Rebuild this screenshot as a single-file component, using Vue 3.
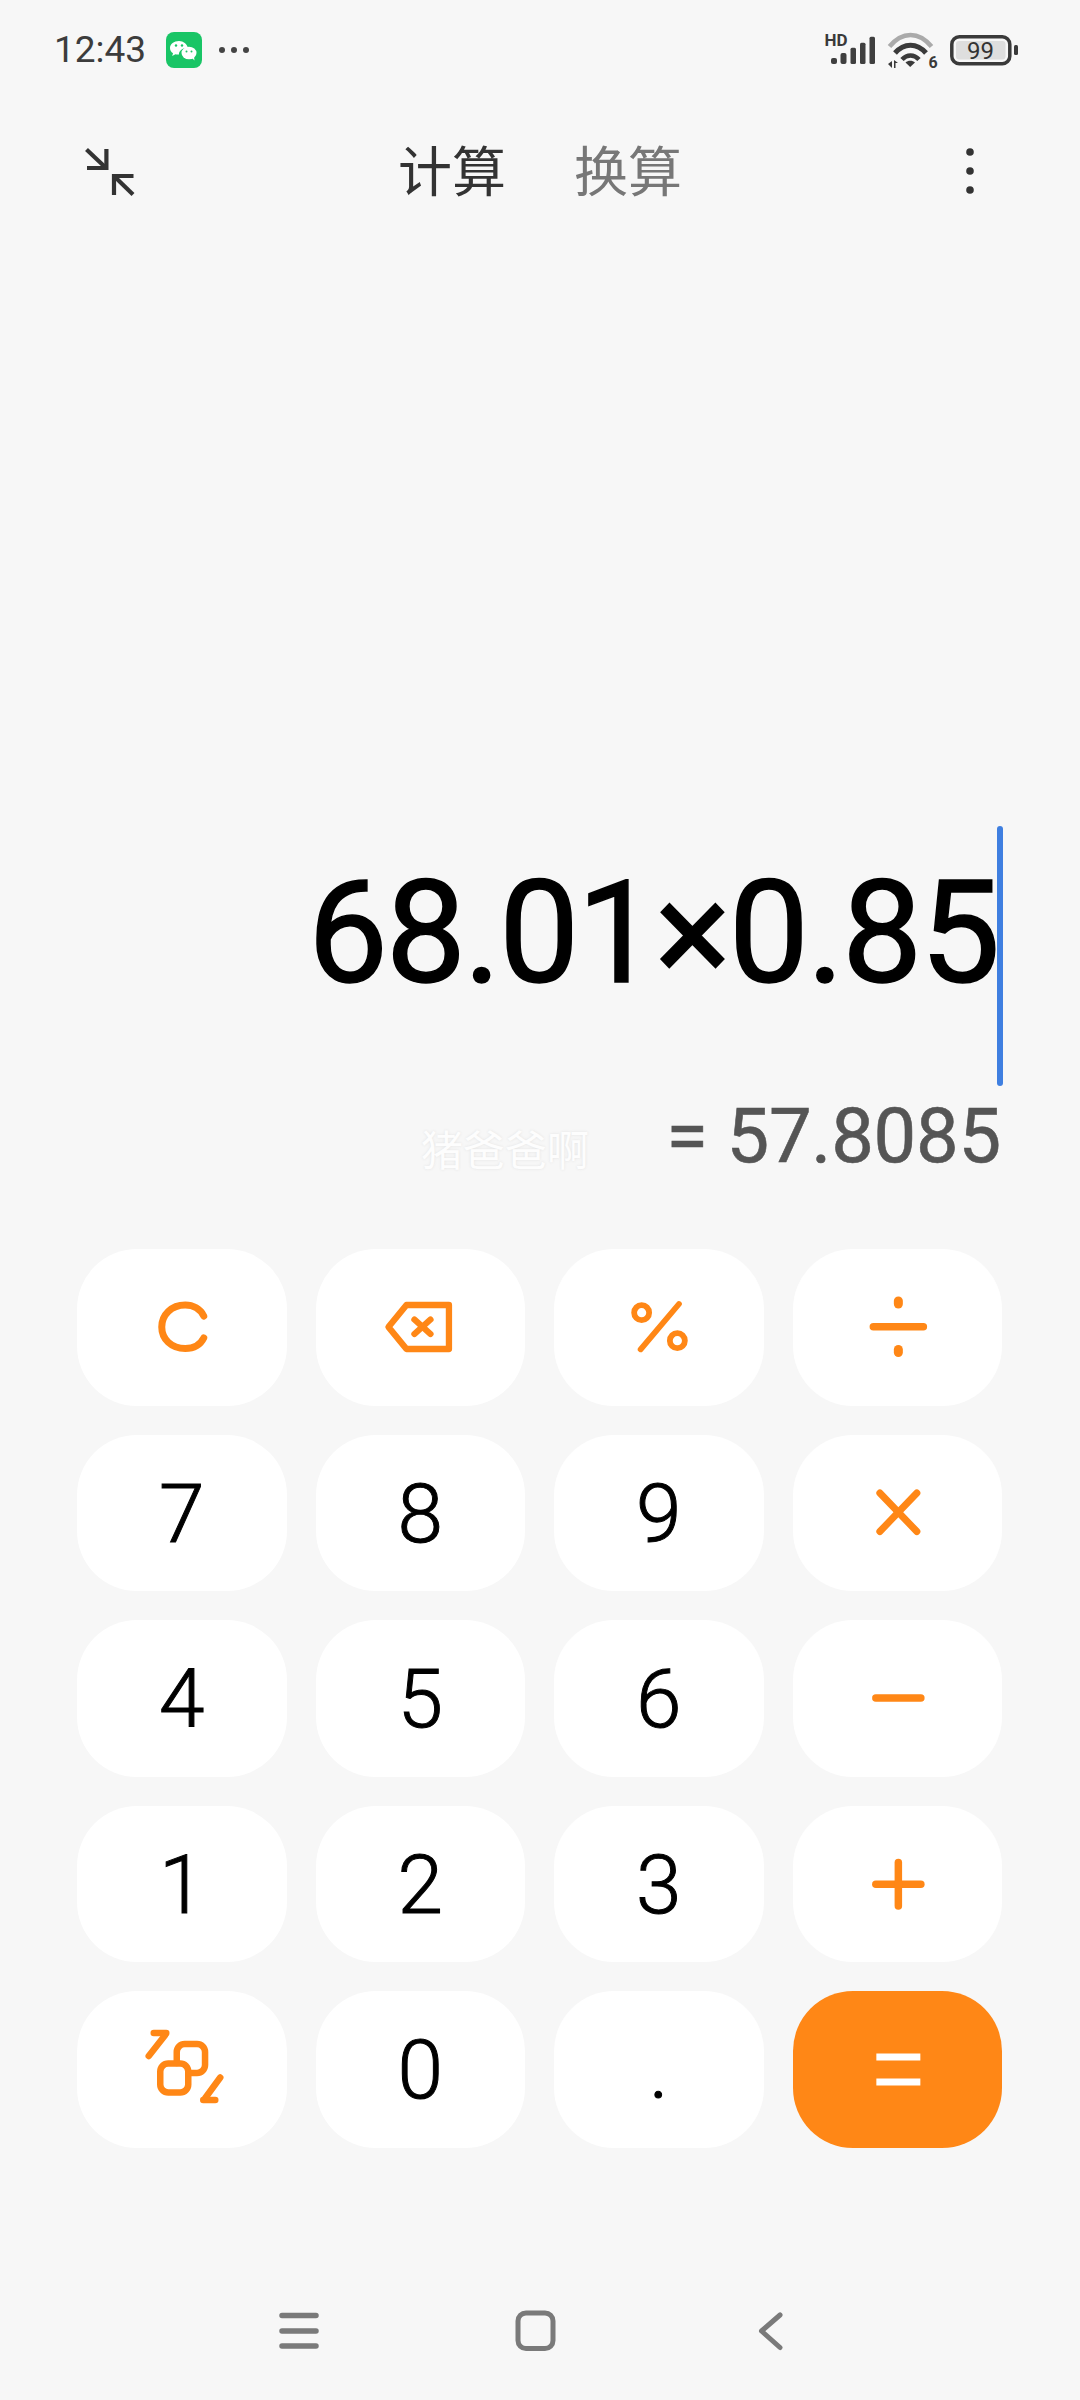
<script setup>
const ICONS = {
  c: { stroke: 7, paths: ['M203.5 1316C200 1309 193 1305 185 1305C171 1305 161.500 1315 161.500 1327C161.500 1339 171 1348.500 185 1348.500C193 1348.500 200 1345 203.500 1338'] },
  back: { stroke: 6.3, paths: ['M388.500 1327L406.500 1305H449V1349H406.500Z', 'M414.500 1319.500L430.500 1334', 'M430.500 1319.500L414.500 1334'] },
  pct: { stroke: 5.8, paths: ['M678.300 1304L640 1349.300', 'M648.500 1312.700a7.500 7.500 0 1 1-15 0a7.500 7.500 0 1 1 15 0Z', 'M684.200 1340.700a7.500 7.500 0 1 1-15 0a7.500 7.500 0 1 1 15 0Z'] },
  div: { stroke: 7.5, paths: ['M873 1326.700H923', 'M898 1301V1304', 'M898 1349.500V1352.500'], width: 9 },
  mul: { stroke: 7, paths: ['M879.500 1492.500L916.500 1531', 'M916.500 1492.500L879.500 1531'] },
  sub: { stroke: 7.5, paths: ['M875.500 1698H920.500'] },
  add: { stroke: 7.5, paths: ['M875.500 1883.800H920.500', 'M898 1862V1905.500'] },
  swap: { stroke: 6.5, paths: ['M168 2063.500h12a8 8 0 0 1 8 8v13a8 8 0 0 1-8 8h-12a8 8 0 0 1-8-8v-13a8 8 0 0 1 8-8Z', 'M176.500 2063V2052a8 8 0 0 1 8-8h12.300a8 8 0 0 1 8 8v13a8 8 0 0 1-8 8H188', 'M148.500 2056L165 2035', 'M153.500 2033H166', 'M220 2077.500L205 2098', 'M203 2100H215'] },
  eq: { stroke: 7, light: true, butt: true, paths: ['M876 2057H920', 'M876 2082H920'] },
}

const rows = [
  [{ icon: 'c', label: 'C' }, { icon: 'back' }, { icon: 'pct' }, { icon: 'div' }],
  [{ t: '7' }, { t: '8' }, { t: '9' }, { icon: 'mul' }],
  [{ t: '4' }, { t: '5' }, { t: '6' }, { icon: 'sub' }],
  [{ t: '1' }, { t: '2' }, { t: '3' }, { icon: 'add' }],
  [{ icon: 'swap' }, { t: '0' }, { t: '.' }, { icon: 'eq', primary: true }],
]

const keys = rows.flatMap((row, r) =>
  row.map((k, c) => {
    const cx = 181.75 + 238.3 * c
    const cy = 1327 + 185.5 * r
    return { ...k, id: `${r}-${c}`, vb: `${cx - 60} ${cy - 60} 120 120`, def: k.icon ? ICONS[k.icon] : null }
  })
)
</script>

<template>
  <div class="page">
    <div class="status">
      <span class="time">12:43</span>
      <svg class="wechat" viewBox="166 32 36 36" width="36" height="36">
        <rect x="166" y="32" width="36" height="36" rx="8" fill="#19c566" />
        <path d="M179 41c-5 0-9 3-9 7c0 2.200 1 4 3 5.200l-.8 2.800l3.200-1.800c1.100.3 2.400.4 3.600.3c-.4-3 3-7 9-6.500C187 44 183.500 41 179 41Z" fill="#fff" />
        <ellipse cx="189" cy="53" rx="7.500" ry="6.300" fill="#fff" />
        <path d="M192 58l2.500 2.500l-.5-3.500Z" fill="#fff" />
        <circle cx="176" cy="45.500" r="1.200" fill="#19c566" />
        <circle cx="182" cy="45.500" r="1.200" fill="#19c566" />
        <circle cx="186.500" cy="51.500" r="1" fill="#19c566" />
        <circle cx="191.500" cy="51.500" r="1" fill="#19c566" />
      </svg>
      <svg class="more" viewBox="218 44 32 12" width="32" height="12">
        <circle cx="222" cy="50" r="3" fill="#444" />
        <circle cx="234" cy="50" r="3" fill="#444" />
        <circle cx="246" cy="50" r="3" fill="#444" />
      </svg>
      <svg class="signal" viewBox="824 30 196 42" width="196" height="42">
        <text x="824.500" y="46" class="hd">HD</text>
        <g fill="#3f3f3f">
          <rect x="831" y="58" width="6" height="6" rx="2" />
          <rect x="840.500" y="53" width="6" height="11" rx="2" />
          <rect x="850.500" y="47.700" width="5.500" height="16.300" rx="1.500" />
          <rect x="860" y="42.700" width="5.500" height="21.300" rx="1.500" />
          <rect x="869.500" y="36.700" width="5.500" height="27.300" rx="1.500" />
        </g>
        <g fill="none" stroke-linecap="butt">
          <path d="M889.500 46.500C902 31 919 31 931.500 46.500" stroke="#aaa" stroke-width="4.500" />
          <path d="M895 53C904 42.500 917 42.500 926 53" stroke="#3a3a3a" stroke-width="5" />
          <path d="M902 59.500C907 54 914 54 919 59.500" stroke="#3a3a3a" stroke-width="4.500" />
        </g>
        <path d="M905.500 62.500C908 60 912.500 60 915 62.500L910.200 67Z" fill="#3a3a3a" />
        <path d="M888 64l4-3v7ZM894 60l4 3h-2.500v5h-1.500Z" fill="#3a3a3a" />
        <text x="928.500" y="68" class="six">6</text>
        <rect x="951.800" y="36.800" width="58" height="27" rx="7.500" fill="none" stroke="#3a3a3a" stroke-width="3.500" />
        <rect x="956" y="41" width="49.500" height="18.500" rx="3" fill="#dedede" />
        <text x="980.500" y="58.500" class="batt">99</text>
        <rect x="1014" y="45" width="4" height="10" rx="1.500" fill="#3a3a3a" />
      </svg>
    </div>

    <header class="head">
      <svg class="collapse" viewBox="80 140 60 60" width="60" height="60">
        <g fill="none" stroke="#333" stroke-width="4.200">
          <path d="M86.500 148.500L105 166" />
          <path d="M106.400 148V167H87" />
          <path d="M133 193.500L115.500 176.500" />
          <path d="M114 194V175H133.500" />
        </g>
      </svg>
      <nav class="tabs">
        <span class="tab on">计算</span>
        <span class="tab">换算</span>
      </nav>
      <svg class="menu" viewBox="960 145 20 52" width="20" height="52">
        <circle cx="970" cy="152" r="3.800" fill="#333" />
        <circle cx="970" cy="171" r="3.800" fill="#333" />
        <circle cx="970" cy="190" r="3.800" fill="#333" />
      </svg>
    </header>

    <section class="display">
      <div class="expr">68.01×0.85<i class="caret"></i></div>
      <div class="result">
        <span class="mark">猪爸爸啊</span>
        <span>= 57.8085</span>
      </div>
    </section>

    <section class="pad">
      <button v-for="k in keys" :key="k.id" class="key" :class="{ primary: k.primary }">
        <span v-if="k.t" class="num">{{ k.t }}</span>
        <svg v-else class="ic" :viewBox="k.vb" width="120" height="120">
          <path
            v-for="(d, i) in k.def.paths"
            :key="i"
            :d="d"
            fill="none"
            :stroke="k.def.light ? '#fff' : '#ff8716'"
            :stroke-width="i > 0 && k.def.width ? k.def.width : k.def.stroke"
            :stroke-linecap="k.def.butt ? 'butt' : 'round'"
            stroke-linejoin="round"
          />
        </svg>
      </button>
    </section>

    <footer class="nav">
      <svg viewBox="270 2300 60 60" width="60" height="60">
        <path d="M282 2315.500H316M282 2331H316M282 2346H316" fill="none" stroke="#7a7a7a" stroke-width="5.500" stroke-linecap="round" />
      </svg>
      <svg viewBox="505 2300 60 60" width="60" height="60">
        <rect x="518" y="2313" width="35" height="35.500" rx="8" fill="none" stroke="#7a7a7a" stroke-width="5" />
      </svg>
      <svg viewBox="740 2300 60 60" width="60" height="60">
        <path d="M780 2315L761.500 2331L780 2347.500" fill="none" stroke="#7a7a7a" stroke-width="5" stroke-linecap="round" stroke-linejoin="round" />
      </svg>
    </footer>
  </div>
</template>

<style scoped>
.page {
  width: 1080px;
  height: 2400px;
  background: #f7f7f7;
  display: flex;
  flex-direction: column;
  font-family: Roboto, "Noto Sans CJK SC", sans-serif;
  overflow: hidden;
}
.status {
  height: 100px;
  flex: none;
  display: flex;
  align-items: flex-start;
  padding-left: 54px;
  box-sizing: border-box;
}
.time {
  font-size: 37px;
  line-height: 50px;
  height: 50px;
  margin-top: 25px;
  color: #3c3c3c;
  width: 112px;
}
.wechat { margin-top: 32px; }
.more { margin: 44px 0 0 16px; }
.signal { margin: 30px 0 0 574px; }
.hd { font: 700 17px Roboto, sans-serif; fill: #3a3a3a; }
.six { font: 700 16px Roboto, sans-serif; fill: #3a3a3a; }
.batt { font: 400 24px Roboto, sans-serif; fill: #333; text-anchor: middle; }

.head {
  height: 142px;
  flex: none;
  display: flex;
  align-items: center;
  padding: 0 100px 0 80px;
  justify-content: space-between;
}
.tabs {
  display: flex;
  gap: 68px;
  margin-left: -20px;
  padding-top: 5px;
}
.tab {
  font-size: 54px;
  line-height: 60px;
  color: #777;
}
.tab.on { color: #333; }

.display {
  height: 1007px;
  flex: none;
  display: flex;
  flex-direction: column;
  justify-content: flex-end;
  align-items: flex-end;
  padding: 0 79px 63px 0;
  box-sizing: border-box;
}
.expr {
  position: relative;
  font-size: 143px;
  font-weight: 400;
  -webkit-text-stroke: 1.5px #000;
  line-height: 214px;
  padding-bottom: 46px;
  letter-spacing: -2.4px;
  color: #000;
  white-space: nowrap;
  margin-right: 3px;
}
.caret {
  position: absolute;
  left: 100%;
  top: 0;
  margin-left: -1px;
  width: 6px;
  height: 260px;
  border-radius: 3px;
  background: #3f7fe0;
}
.result {
  position: relative;
  font-size: 76px;
  line-height: 100px;
  letter-spacing: -0.25px;
  -webkit-text-stroke: 0.6px #555;
  color: #555;
  white-space: nowrap;
}
.mark {
  position: absolute;
  right: 412px;
  top: 41px;
  font-size: 42px;
  line-height: 50px;
  letter-spacing: 0;
  color: #fdfdfd;
  -webkit-text-stroke: 0;
  text-shadow: 0 0 3px #e2e2e2;
}

.pad {
  flex: none;
  display: grid;
  grid-template-columns: repeat(4, 209.5px);
  grid-auto-rows: 156.5px;
  column-gap: 29px;
  row-gap: 29px;
  padding-left: 77px;
}
.key {
  border: 0;
  padding: 0;
  background: #fff;
  border-radius: 60px;
  display: flex;
  align-items: center;
  justify-content: center;
  font-family: Roboto, sans-serif;
  font-weight: 300;
  font-size: 82px;
  color: #000;
}
.num {
  padding-top: 2px;
  -webkit-text-stroke: 1px #000;
}
.key.primary { background: #ff8716; }

.nav {
  position: relative;
  flex: 1;
  display: flex;
  align-items: flex-end;
  padding: 0 0 40px 270px;
  gap: 175px;
}
</style>
